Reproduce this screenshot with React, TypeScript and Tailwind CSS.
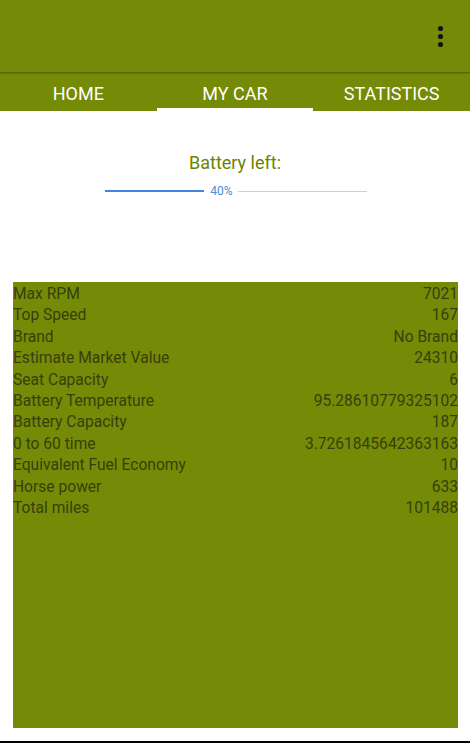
import React from 'react';

const specs: [string, string][] = [
  ['Max RPM', '7021'],
  ['Top Speed', '167'],
  ['Brand', 'No Brand'],
  ['Estimate Market Value', '24310'],
  ['Seat Capacity', '6'],
  ['Battery Temperature', '95.28610779325102'],
  ['Battery Capacity', '187'],
  ['0 to 60 time', '3.7261845642363163'],
  ['Equivalent Fuel Economy', '10'],
  ['Horse power', '633'],
  ['Total miles', '101488'],
];

const tabs = ['HOME', 'MY CAR', 'STATISTICS'];

export default function App() {
  const battery = 40;

  return (
    <div className="w-[470px] h-[743px] flex flex-col bg-white overflow-hidden font-['Roboto',sans-serif]">
      {/* action bar */}
      <div className="h-[72px] bg-[#758a06] flex items-center justify-end pr-[27px]">
        <div className="flex flex-col gap-[3px]">
          <span className="w-[5px] h-[5px] rounded-full bg-[#111]" />
          <span className="w-[5px] h-[5px] rounded-full bg-[#111]" />
          <span className="w-[5px] h-[5px] rounded-full bg-[#111]" />
        </div>
      </div>
      <div className="h-[2px] bg-gradient-to-b from-[#55640a] to-[#6a7d06]" />

      {/* tabs */}
      <div className="h-[37px] bg-[#758a06] flex">
        {tabs.map((t, i) => (
          <div key={t} className="flex-1 flex flex-col">
            <div className="flex-1 flex items-center justify-center text-white text-[18px] pt-[4px]">{t}</div>
            <div className={i === 1 ? 'h-[3px] bg-white' : 'h-[3px]'} />
          </div>
        ))}
      </div>

      {/* battery */}
      <div className="flex flex-col items-center pt-[41px]">
        <div className="text-[18px] text-[#6b8400] leading-[22px]">Battery left:</div>
        <div className="flex items-center w-[262px] mt-[9px] ml-[1px]">
          <div className="flex-1 flex items-center">
            <div className="h-[2px] bg-[#3f86e0]" style={{ width: `${battery * 2.475}px` }} />
          </div>
          <span className="text-[12px] text-[#4a8ad8] px-[5px] leading-[16px]">{battery}%</span>
          <div className="w-[129px] h-[1px] bg-[#cfcfcf]" />
        </div>
      </div>

      {/* specs table */}
      <div className="mt-[83px] mx-[13px] mr-[12px] h-[446px] bg-[#758a06] pt-[2px]">
        {specs.map(([label, value]) => (
          <div key={label} className="flex justify-between text-[15.6px] leading-[21.4px] text-[#36400c]">
            <span>{label}</span>
            <span>{value}</span>
          </div>
        ))}
      </div>

      <div className="flex-1" />
      <div className="h-[2px] bg-black" />
    </div>
  );
}
